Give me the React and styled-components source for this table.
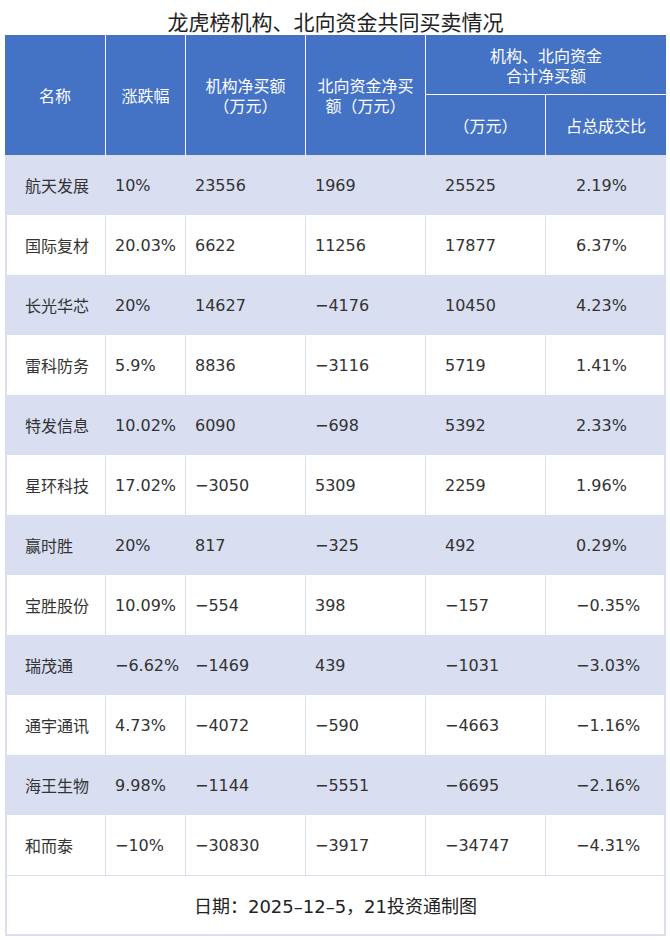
import React from "react";
import styled, { createGlobalStyle } from "styled-components";

const BLUE = "#4472c4";
const BAND = "#d9def1";

const rows = [
  ["航天发展", "10%", "23556", "1969", "25525", "2.19%"],
  ["国际复材", "20.03%", "6622", "11256", "17877", "6.37%"],
  ["长光华芯", "20%", "14627", "−4176", "10450", "4.23%"],
  ["雷科防务", "5.9%", "8836", "−3116", "5719", "1.41%"],
  ["特发信息", "10.02%", "6090", "−698", "5392", "2.33%"],
  ["星环科技", "17.02%", "−3050", "5309", "2259", "1.96%"],
  ["赢时胜", "20%", "817", "−325", "492", "0.29%"],
  ["宝胜股份", "10.09%", "−554", "398", "−157", "−0.35%"],
  ["瑞茂通", "−6.62%", "−1469", "439", "−1031", "−3.03%"],
  ["通宇通讯", "4.73%", "−4072", "−590", "−4663", "−1.16%"],
  ["海王生物", "9.98%", "−1144", "−5551", "−6695", "−2.16%"],
  ["和而泰", "−10%", "−30830", "−3917", "−34747", "−4.31%"],
];

// left padding of each body column
const pads = [18, 9, 9, 9, 19, 30];

const GlobalStyle = createGlobalStyle`
  body {
    margin: 0;
    background: #fff;
    font-family: "DejaVu Sans", "Noto Sans CJK SC", sans-serif;
    text-spacing-trim: space-all;
  }
`;

const Page = styled.div`
  width: 670px;
  padding-left: 5px;
  box-sizing: border-box;
`;

const Title = styled.h1`
  margin: 0;
  width: 661px;
  height: 35px;
  padding-top: 8px;
  box-sizing: border-box;
  font-size: 21px;
  font-weight: normal;
  line-height: 27px;
  color: #222;
  text-align: center;
  font-family: "Noto Sans CJK SC", sans-serif;
`;

const Head = styled.div`
  display: grid;
  width: 661px;
  grid-template-columns: 100px 80px 120px 120px 120px 121px;
  grid-template-rows: 60px 60px;
  background: ${BLUE};
`;

const HeadCell = styled.div`
  grid-column: ${(p) => p.$col};
  grid-row: ${(p) => p.$row};
  display: flex;
  align-items: center;
  justify-content: center;
  text-align: center;
  padding: 0 10px;
  box-sizing: border-box;
  color: #fff;
  font-size: 16px;
  line-height: 20px;
  font-family: "Noto Sans CJK SC", sans-serif;
  border-left: ${(p) => (p.$first ? "none" : "1px solid #fff")};
  border-bottom: ${(p) => (p.$split ? "1px solid #fff" : "none")};
`;

const Body = styled.div`
  width: 661px;
  box-sizing: border-box;
  border: 2px solid ${BAND};
  border-top: none;
`;

const Row = styled.div`
  display: grid;
  grid-template-columns: 98px 80px 120px 120px 120px 119px;
  height: 60px;
  background: ${(p) => (p.$band ? BAND : "#fff")};
`;

const Cell = styled.div`
  display: flex;
  align-items: center;
  padding-left: ${(p) => p.$pad}px;
  box-sizing: border-box;
  color: #333;
  font-size: 16px;
  white-space: nowrap;
  border-left: ${(p) => (p.$first ? "none" : `1px solid ${BAND}`)};
`;

const Footer = styled.div`
  height: 58px;
  border-top: 1px solid ${BAND};
  display: flex;
  align-items: center;
  justify-content: center;
  color: #222;
  font-size: 18px;
`;

export default function App() {
  return (
    <>
      <GlobalStyle />
      <Page>
        <Title>龙虎榜机构、北向资金共同买卖情况</Title>
        <Head>
          <HeadCell $col="1" $row="1 / 3" $first>名称</HeadCell>
          <HeadCell $col="2" $row="1 / 3">涨跌幅</HeadCell>
          <HeadCell $col="3" $row="1 / 3">机构净买额（万元）</HeadCell>
          <HeadCell $col="4" $row="1 / 3">北向资金净买额（万元）</HeadCell>
          <HeadCell $col="5 / 7" $row="1" $split>
            机构、北向资金
            <br />
            合计净买额
          </HeadCell>
          <HeadCell $col="5" $row="2">（万元）</HeadCell>
          <HeadCell $col="6" $row="2">占总成交比</HeadCell>
        </Head>
        <Body>
          {rows.map((r, i) => (
            <Row key={r[0]} $band={i % 2 === 0}>
              {r.map((v, j) => (
                <Cell key={j} $pad={pads[j]} $first={j === 0}>
                  {v}
                </Cell>
              ))}
            </Row>
          ))}
          <Footer>日期：2025–12–5，21投资通制图</Footer>
        </Body>
      </Page>
    </>
  );
}
